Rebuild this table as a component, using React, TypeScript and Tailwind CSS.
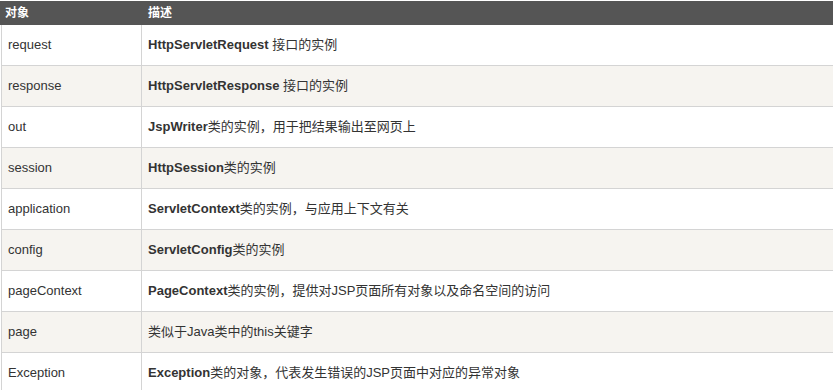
import React from "react";

const rows: [string, string | null, string][] = [
  ["request", "HttpServletRequest", " 接口的实例"],
  ["response", "HttpServletResponse", " 接口的实例"],
  ["out", "JspWriter", "类的实例，用于把结果输出至网页上"],
  ["session", "HttpSession", "类的实例"],
  ["application", "ServletContext", "类的实例，与应用上下文有关"],
  ["config", "ServletConfig", "类的实例"],
  ["pageContext", "PageContext", "类的实例，提供对JSP页面所有对象以及命名空间的访问"],
  ["page", null, "类似于Java类中的this关键字"],
  ["Exception", "Exception", "类的对象，代表发生错误的JSP页面中对应的异常对象"],
];

export default function App() {
  return (
    <div
      className="w-[833px] h-[390px] overflow-hidden bg-white pt-px text-[#333]"
      style={{ fontFamily: '"Liberation Sans", Arial, "Noto Sans CJK SC", sans-serif' }}
    >
      <div className="w-[840px]">
        <div className="flex h-[24px] bg-[#555] text-white text-[12px] font-bold items-center">
          <div className="w-[142px] pl-[5px]">对象</div>
          <div className="flex-1 pl-[6px]">描述</div>
        </div>
        <div className="ml-px">
          {rows.map((r, i) => (
            <div
              key={i}
              className={`flex h-[41px] border-b border-[#d4d4d4] text-[13px] ${
                i % 2 === 1 ? "bg-[#f6f4f0]" : "bg-white"
              }`}
            >
              <div className="w-[141px] shrink-0 border-l border-[#d4d4d4] border-r pl-[6px] flex items-center">
                {r[0]}
              </div>
              <div className="flex-1 pl-[6px] flex items-center">
                {r[1] && <b>{r[1]}</b>}
                <span className="whitespace-pre">{r[2]}</span>
              </div>
            </div>
          ))}
        </div>
      </div>
    </div>
  );
}
